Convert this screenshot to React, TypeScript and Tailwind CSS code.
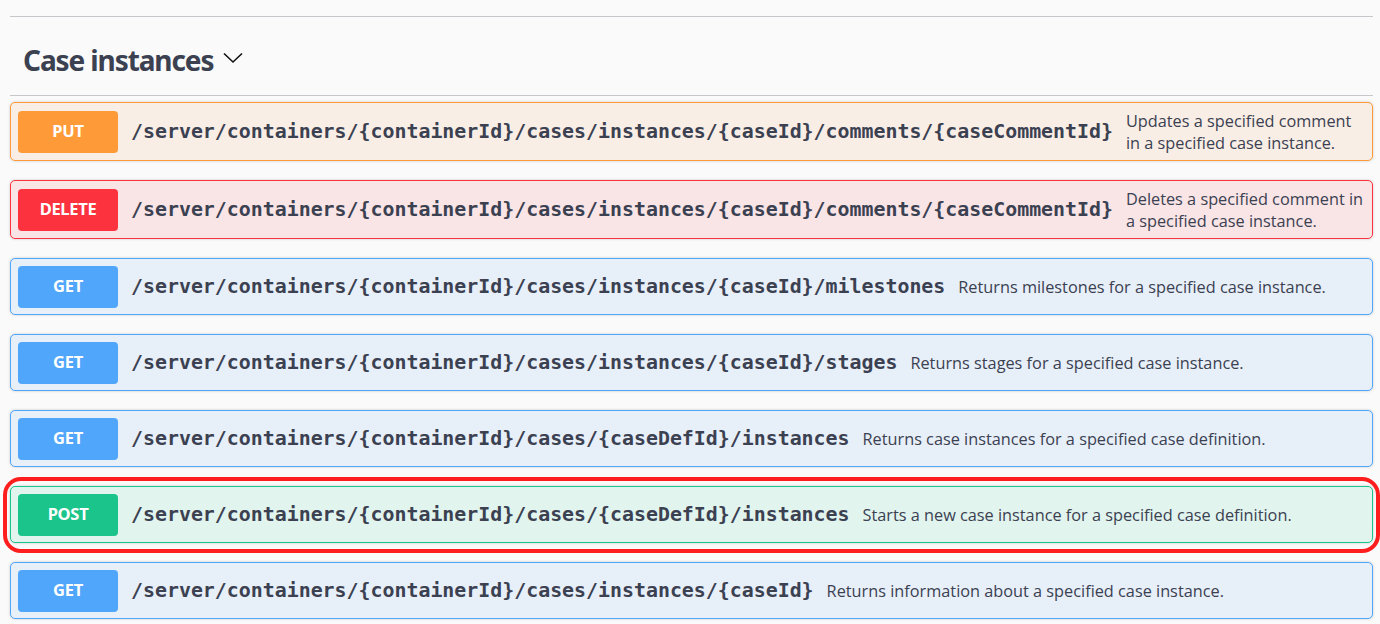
const ops = [
  {
    method: "PUT",
    path: "/server/containers/{containerId}/cases/instances/{caseId}/comments/{caseCommentId}",
    desc: ["Updates a specified comment", "in a specified case instance."],
    row: "bg-[#f9eee6] border-[#fe9b38]",
    badge: "bg-[#fe9b38]",
  },
  {
    method: "DELETE",
    path: "/server/containers/{containerId}/cases/instances/{caseId}/comments/{caseCommentId}",
    desc: ["Deletes a specified comment in", "a specified case instance."],
    row: "bg-[#f9e4e6] border-[#fc333f]",
    badge: "bg-[#fc333f]",
  },
  {
    method: "GET",
    path: "/server/containers/{containerId}/cases/instances/{caseId}/milestones",
    desc: ["Returns milestones for a specified case instance."],
    row: "bg-[#e7eff9] border-[#50a6fb]",
    badge: "bg-[#50a6fb]",
  },
  {
    method: "GET",
    path: "/server/containers/{containerId}/cases/instances/{caseId}/stages",
    desc: ["Returns stages for a specified case instance."],
    row: "bg-[#e7eff9] border-[#50a6fb]",
    badge: "bg-[#50a6fb]",
  },
  {
    method: "GET",
    path: "/server/containers/{containerId}/cases/{caseDefId}/instances",
    desc: ["Returns case instances for a specified case definition."],
    row: "bg-[#e7eff9] border-[#50a6fb]",
    badge: "bg-[#50a6fb]",
  },
  {
    method: "POST",
    path: "/server/containers/{containerId}/cases/{caseDefId}/instances",
    desc: ["Starts a new case instance for a specified case definition."],
    row: "bg-[#e1f4ee] border-[#1bc48a]",
    badge: "bg-[#1bc48a]",
    marked: true,
  },
  {
    method: "GET",
    path: "/server/containers/{containerId}/cases/instances/{caseId}",
    desc: ["Returns information about a specified case instance."],
    row: "bg-[#e7eff9] border-[#50a6fb]",
    badge: "bg-[#50a6fb]",
  },
];

export default function App() {
  return (
    <div className="h-[624px] overflow-hidden bg-[#fafafa] pl-[10px] pr-[7px] pt-4 text-[#3b4151]">
      <div className="border-t border-b border-[#c6c7cb] h-[80px] flex items-center pl-[13px] pt-[7px] gap-[10px]">
        <h2 className="text-[28px] font-bold tracking-[-1.1px] font-['Noto_Sans',sans-serif] leading-none">
          Case instances
        </h2>
        <svg width="20" height="12" viewBox="0 0 20 12" className="mt-[-4px]">
          <polyline points="1,1.5 10,10 19,1.5" fill="none" stroke="#111" strokeWidth="1.6" />
        </svg>
      </div>
      <div className="mt-[6px] flex flex-col gap-[19px]">
        {ops.map((op, i) => (
          <div key={i} className="relative">
            <div
              className={`flex items-center border rounded-[5px] px-[7px] py-[6.5px] shadow-[0_0_3px_rgba(0,0,0,0.19)] ${op.row}`}
            >
              <div
                className={`w-[100px] h-[42px] shrink-0 rounded-[4px] flex items-center justify-center text-white text-[16.5px] font-bold font-['Noto_Sans',sans-serif] tracking-[-0.3px] ${op.badge}`}
              >
                {op.method}
              </div>
              <div className="ml-[13px] text-[19.9px] font-bold font-['DejaVu_Sans_Mono',monospace] whitespace-nowrap text-[#3b4151]">
                {op.path}
              </div>
              <div className="ml-[13px] text-[16.3px] leading-[22px] font-['Open_Sans',sans-serif] text-[#3b4151] whitespace-nowrap">
                {op.desc.map((l, j) => (
                  <div key={j}>{l}</div>
                ))}
              </div>
            </div>
            {op.marked && (
              <div className="absolute -left-[7px] -top-[9px] -right-[7px] -bottom-[10px] border-[4px] border-[#ff1e1e] rounded-[18px] pointer-events-none" />
            )}
          </div>
        ))}
      </div>
    </div>
  );
}
